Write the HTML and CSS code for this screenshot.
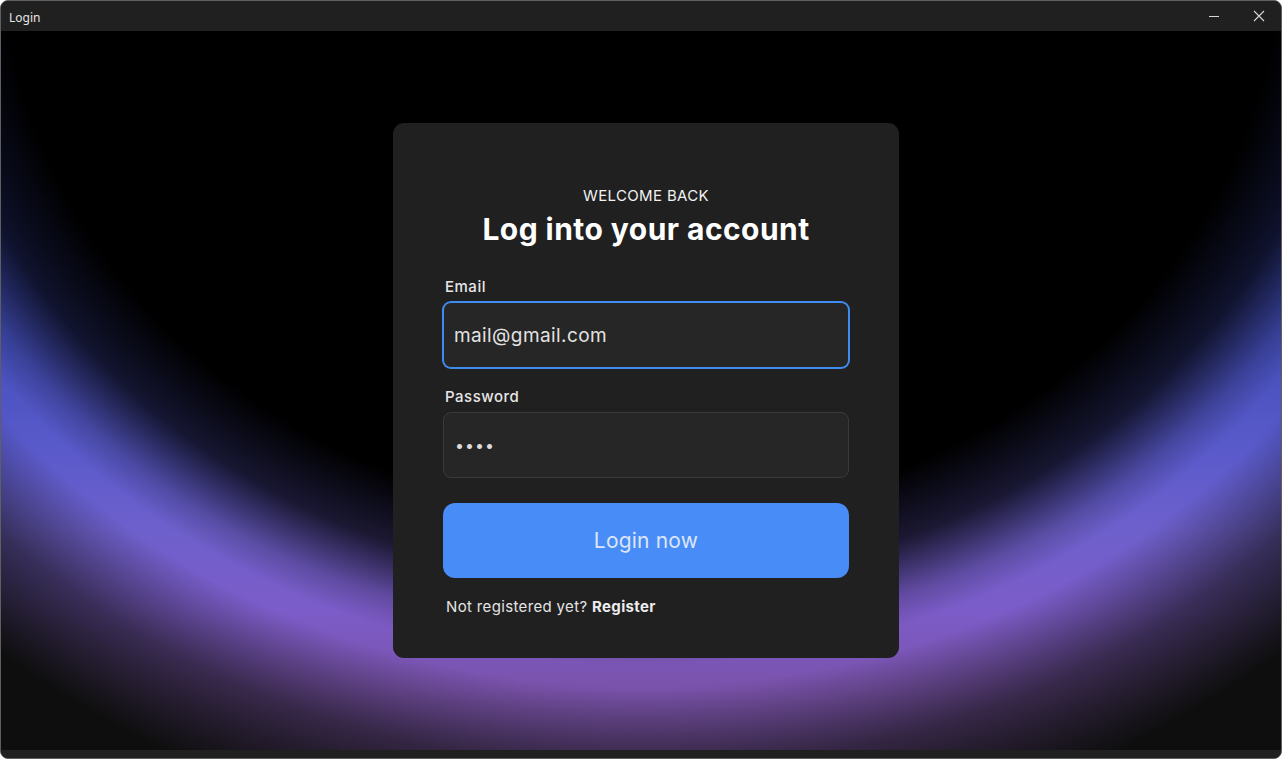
FILE: index.html
```html
<!DOCTYPE html>
<html lang="en">
<head>
<meta charset="utf-8">
<title>Login</title>
<link rel="stylesheet" href="styles.css">
</head>
<body>
<div class="window">
  <header class="titlebar">
    <span class="title">Login</span>
    <div class="controls">
      <span class="ctrl">
        <svg width="12" height="12" viewBox="0 0 12 12"><path d="M1 6.5h10" stroke="#d6d6d6" stroke-width="1" fill="none"/></svg>
      </span>
      <span class="ctrl">
        <svg width="12" height="12" viewBox="0 0 12 12"><path d="M1 1l10 10M11 1L1 11" stroke="#d6d6d6" stroke-width="1.1" fill="none"/></svg>
      </span>
    </div>
  </header>
  <main class="content">
    <form class="card">
      <p class="eyebrow">WELCOME BACK</p>
      <h1 class="heading">Log into your account</h1>
      <label class="label">Email</label>
      <div class="field focused">mail@gmail.com</div>
      <label class="label label-gap">Password</label>
      <div class="field dots">••••</div>
      <div class="button">Login now</div>
      <p class="footer">Not registered yet? <b>Register</b></p>
    </form>
  </main>
  <div class="bottombar"></div>
</div>
</body>
</html>
```

FILE: styles.css
```css
* { box-sizing: border-box; }
html, body { margin: 0; padding: 0; background: #ffffff; }
body { width: 1282px; height: 759px; overflow: hidden; }

.window {
  width: 1282px;
  height: 759px;
  border: 1px solid #5f5f5f;
  border-radius: 8px;
  overflow: hidden;
  display: flex;
  flex-direction: column;
  background: #202020;
}

.titlebar {
  height: 30px;
  flex: none;
  display: flex;
  align-items: center;
  justify-content: space-between;
  background: #202020;
  padding-left: 8px;
}
.title {
  font-family: "Noto Sans", "Liberation Sans", sans-serif;
  font-size: 12px;
  color: #e6e6e6;
  margin-top: 2px;
}
.controls { display: flex; height: 30px; }
.ctrl {
  width: 46px;
  height: 30px;
  display: flex;
  align-items: center;
  justify-content: center;
}
.ctrl:last-child { width: 44px; }

.content {
  flex: 1;
  display: flex;
  align-items: center;
  justify-content: center;
  padding-left: 10px;
  background:
    radial-gradient(ellipse 820px 740px at 50% -91px,
      #000 0%, #000 78%, rgba(0,0,0,0.75) 87%, rgba(0,0,0,0.2) 94%, rgba(0,0,0,0) 98%, rgba(0,0,0,0) 101%, rgba(14,14,14,0.6) 112%, #0e0e0e 124%),
    linear-gradient(to bottom,
      #2c3a98 0px, #3a48b0 220px, #4650bc 320px, #5a5acb 420px, #6e60cc 500px, #7c5cc8 580px, #7a52aa 660px, #6a4890 719px);
}

.bottombar { height: 8px; flex: none; background: #202020; }

.card {
  width: 506px;
  height: 535px;
  background: #202020;
  border-radius: 11px;
  padding: 62px 50px 0 50px;
  margin: 0;
  display: flex;
  flex-direction: column;
  font-family: "Inter", "Noto Sans", sans-serif;
  color: #f2f2f2;
}

.eyebrow {
  margin: 0;
  text-align: center;
  font-size: 15px;
  line-height: 22px;
  font-weight: 400;
  letter-spacing: 0.35px;
}
.heading {
  margin: 2px 0 0 0;
  text-align: center;
  font-size: 30px;
  line-height: 40px;
  font-weight: 700;
  color: #ffffff;
  letter-spacing: 0.45px;
}

.label {
  display: block;
  margin-top: 28px;
  margin-bottom: 5px;
  padding-left: 2px;
  font-size: 15px;
  line-height: 20px;
  font-weight: 500;
  color: #e6e6e6;
  letter-spacing: 0.5px;
}
.label-gap { margin-top: 19px; }

.field {
  height: 66px;
  border: 1px solid #3a3a3a;
  border-radius: 8px;
  background: #262626;
  display: flex;
  align-items: center;
  padding-left: 10px;
  font-size: 19px;
  letter-spacing: 0.4px;
  color: #e2e2e2;
}
.field.focused {
  border-color: #3f8cf0;
  box-shadow: 0 0 0 1px #3f8cf0;
}
.field.dots {
  font-size: 16px;
  letter-spacing: 1px;
  padding-left: 11px;
  color: #dcdcdc;
}

.button {
  margin-top: 25px;
  height: 75px;
  border-radius: 12px;
  background: #488cf8;
  display: flex;
  align-items: center;
  justify-content: center;
  font-size: 21px;
  color: #dde6f7;
  font-weight: 400;
  letter-spacing: 0.2px;
}

.footer {
  margin: 19px 0 0 0;
  padding-left: 3px;
  font-size: 15px;
  line-height: 20px;
  color: #e4e4e4;
  letter-spacing: 0.35px;
}
.footer b { font-weight: 700; color: #ececec; }
```
